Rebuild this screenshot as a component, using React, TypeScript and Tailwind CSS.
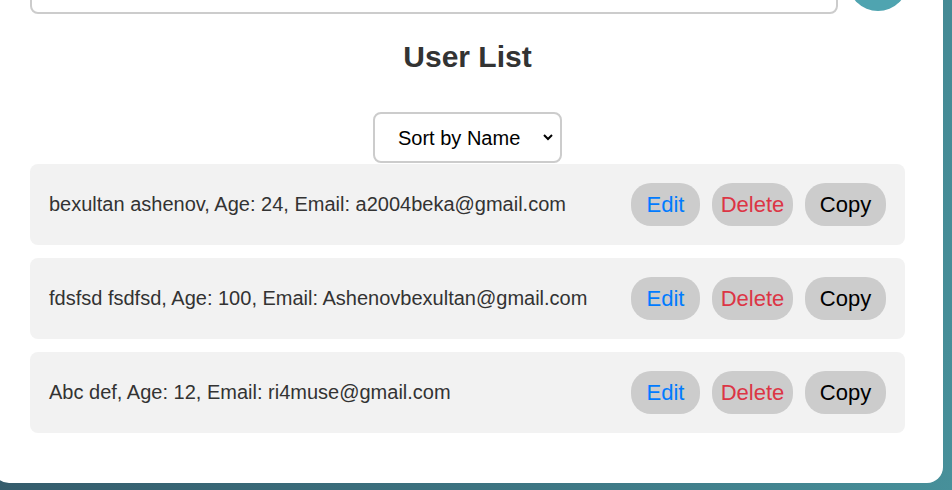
import React, { useState } from "react";

type User = { id: number; name: string; age: number; email: string };

const users: User[] = [
  { id: 1, name: "bexultan ashenov", age: 24, email: "a2004beka@gmail.com" },
  { id: 2, name: "fdsfsd fsdfsd", age: 100, email: "Ashenovbexultan@gmail.com" },
  { id: 3, name: "Abc def", age: 12, email: "ri4muse@gmail.com" },
];

export default function App() {
  const [sort, setSort] = useState("name");

  return (
    <div className="h-[490px] w-full overflow-hidden bg-[linear-gradient(100deg,#335868_0%,#3d7683_60%,#47909a_100%)] font-['Liberation_Sans',Arial,sans-serif] text-[#333]">
      <div className="ml-[-7px] mt-[-69px] w-[950px] rounded-[16px] bg-white pb-[50px] pl-[37px] pr-[38px] pt-[20px]">
        <div className="flex items-start">
          <input
            className="mt-[13px] h-[50px] flex-1 rounded-[8px] border-2 border-[#ccc] px-3 text-[18px] outline-none"
            placeholder=""
          />
          <button className="ml-[10px] mr-[-3px] h-[60px] w-[60px] shrink-0 rounded-full bg-[#4fa4b0]" />
        </div>

        <h2 className="mt-[28px] text-center text-[30px] font-bold leading-[30px] text-[#333]">
          User List
        </h2>

        <div className="mt-[40px] flex justify-center">
          <div className="relative">
            <select
              value={sort}
              onChange={(e) => setSort(e.target.value)}
              className="h-[51px] w-[189px] appearance-none rounded-[8px] border-2 border-[#ccc] bg-white pl-[23px] text-[20px] text-black outline-none"
            >
              <option value="name">Sort by Name</option>
              <option value="age">Sort by Age</option>
            </select>
            <svg
              className="pointer-events-none absolute right-[8px] top-[20px]"
              width="12"
              height="10"
              viewBox="0 0 12 10"
            >
              <path d="M2 3 L6 7 L10 3" fill="none" stroke="#000" strokeWidth="2" />
            </svg>
          </div>
        </div>

        <ul className="mt-px flex flex-col gap-[13px]">
          {users.map((u) => (
            <li
              key={u.id}
              className="flex h-[81px] items-center rounded-[8px] bg-[#f2f2f2] pl-[19px] pr-[19px]"
            >
              <span className="flex-1 pb-px text-[20px]">
                {u.name}, Age: {u.age}, Email: {u.email}
              </span>
              <div className="flex gap-[12px]">
                <button className="flex h-[43px] w-[69px] items-center justify-center rounded-[20px] bg-[#ccc] text-[22px] text-[#007bff]">
                  Edit
                </button>
                <button className="flex h-[43px] w-[81px] items-center justify-center rounded-[20px] bg-[#ccc] text-[22px] text-[#dc3545]">
                  Delete
                </button>
                <button className="flex h-[43px] w-[81px] items-center justify-center rounded-[20px] bg-[#ccc] text-[22px] text-black">
                  Copy
                </button>
              </div>
            </li>
          ))}
        </ul>
      </div>
    </div>
  );
}
